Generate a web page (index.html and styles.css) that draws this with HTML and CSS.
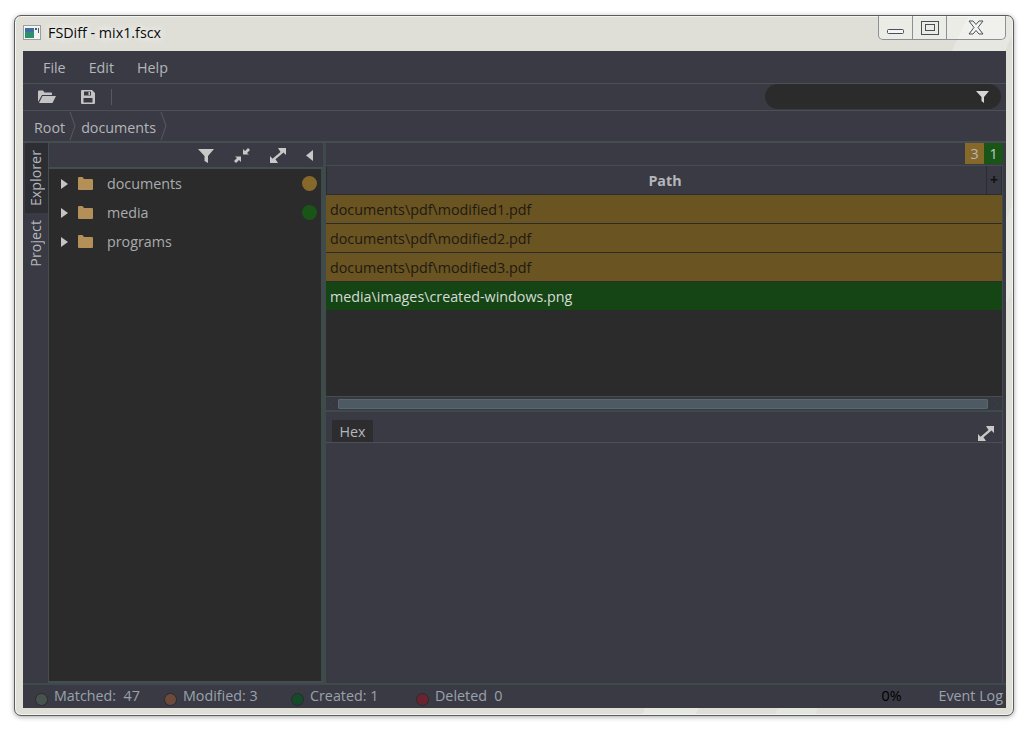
FILE: index.html
```html
<!DOCTYPE html>
<html lang="en">
<head>
<meta charset="utf-8">
<title>FSDiff - mix1.fscx</title>
<link rel="stylesheet" href="styles.css">
</head>
<body>
<div class="window">
  <header class="titlebar">
    <svg class="app-icon" width="18" height="15" viewBox="0 0 18 15">
      <rect x="0.5" y="0.5" width="17" height="14" fill="#f2f4f4" stroke="#9a9fa3"/>
      <rect x="2" y="3" width="9" height="10" fill="#2f8f6c"/>
      <rect x="2" y="3" width="9" height="4" fill="#3f6f9f"/>
      <rect x="12" y="3" width="2" height="2" fill="#4a5a60"/>
      <rect x="15" y="3" width="1" height="5" fill="#4a5a60"/>
    </svg>
    <span class="title-text">FSDiff - mix1.fscx</span>
    <div class="win-controls">
      <div class="win-btn win-min"><svg width="17" height="6" viewBox="0 0 17 6"><rect x="0.5" y="0.5" width="16" height="4" rx="1" fill="#f4f5f6" stroke="#4a4f55"/></svg></div>
      <div class="win-btn win-max"><svg width="18" height="14" viewBox="0 0 18 14"><rect x="0.5" y="0.5" width="17" height="13" fill="none" stroke="#4a4f55"/><rect x="4.500" y="3.500" width="9" height="6" fill="none" stroke="#4a4f55"/></svg></div>
      <div class="win-btn win-close"><svg width="16" height="15" viewBox="0 0 16 15"><path d="M1 1h4l3 3.500L11 1h4L10 7.500l5 6.500h-4L8 10.500 5 14H1l5-6.500z" fill="#f3f4f5" stroke="#4a4f55"/></svg></div>
    </div>
  </header>
  <div class="app">
    <nav class="menubar">
      <span class="menu-item">File</span>
      <span class="menu-item">Edit</span>
      <span class="menu-item">Help</span>
    </nav>
    <div class="toolbar">
      <button class="tool-btn"><svg width="18" height="13" viewBox="0 0 18 13"><path d="M0 12V1.500Q0 .5 1 .5h4l1.500 2H13q1 0 1 1V5H4z" fill="#c4c4c4"/><path d="M4.500 6H18l-3.500 7H1z" fill="#c4c4c4"/></svg></button>
      <button class="tool-btn"><svg width="14" height="14" viewBox="0 0 14 14"><path fill-rule="evenodd" d="M1 0h10l3 3v10q0 1-1 1H1q-1 0-1-1V1q0-1 1-1zM3 1.500V5.500h7V1.500zM2.500 8v4.500h9V8z" fill="#c4c4c4"/><rect x="7.500" y="2" width="1.500" height="3" fill="#c4c4c4"/></svg></button>
      <span class="tool-sep"></span>
      <div class="search">
        <svg width="13" height="13" viewBox="0 0 13 13"><path d="M0 1h13L8 7v6L5.500 11V7z" fill="#d6d6d6"/></svg>
      </div>
    </div>
    <div class="breadcrumb">
      <span class="crumb">Root</span>
      <svg class="crumb-sep" width="7" height="30" viewBox="0 0 7 30"><path d="M1 1l5 14-5 14" fill="none" stroke="#565a60"/></svg>
      <span class="crumb">documents</span>
      <svg class="crumb-sep" width="7" height="30" viewBox="0 0 7 30"><path d="M1 1l5 14-5 14" fill="none" stroke="#565a60"/></svg>
    </div>
    <main class="workspace">
      <aside class="side-tabs">
        <div class="side-tab side-tab-active"><span>Explorer</span></div>
        <div class="side-tab"><span>Project</span></div>
      </aside>
      <section class="explorer">
        <div class="explorer-tools">
          <svg width="16" height="15" viewBox="0 0 16 15"><path d="M0 1h16L10 8v7L6.500 13V8z" fill="#c8c8c8"/></svg>
          <svg width="16" height="15" viewBox="0 0 16 15"><path d="M9 6.500V1l2 2 3-3 2 2-3 3 2 1.500zM7 8.500V14l-2-2-3 3-2-2 3-3-2-1.500z" fill="#c8c8c8"/></svg>
          <svg width="16" height="15" viewBox="0 0 16 15"><path d="M16 0v7l-2.500-2.500-8 6.800L8 15H0V8l2.500 2.700 8-6.800L8 0z" fill="#c8c8c8"/></svg>
          <svg width="7" height="11" viewBox="0 0 7 11"><path d="M7 0v11L0 5.500z" fill="#c8c8c8"/></svg>
        </div>
        <ul class="tree">
          <li class="tree-row"><i class="caret"></i><svg class="folder" width="15" height="13" viewBox="0 0 15 13"><path d="M0 1q0-1 1-1h3.500l1.500 2h8q1 0 1 1v9q0 1-1 1H1q-1 0-1-1z" fill="#b48f58"/></svg><span class="tree-label">documents</span><i class="dot dot-amber"></i></li>
          <li class="tree-row"><i class="caret"></i><svg class="folder" width="15" height="13" viewBox="0 0 15 13"><path d="M0 1q0-1 1-1h3.500l1.500 2h8q1 0 1 1v9q0 1-1 1H1q-1 0-1-1z" fill="#b48f58"/></svg><span class="tree-label">media</span><i class="dot dot-green"></i></li>
          <li class="tree-row"><i class="caret"></i><svg class="folder" width="15" height="13" viewBox="0 0 15 13"><path d="M0 1q0-1 1-1h3.500l1.500 2h8q1 0 1 1v9q0 1-1 1H1q-1 0-1-1z" fill="#b48f58"/></svg><span class="tree-label">programs</span></li>
        </ul>
      </section>
      <section class="details">
        <div class="badges">
          <span class="badge badge-amber">3</span>
          <span class="badge badge-green">1</span>
        </div>
        <div class="table">
          <div class="table-head">
            <div class="th-path">Path</div>
            <div class="th-plus">+</div>
          </div>
          <div class="table-body">
            <div class="file-row file-mod">documents\pdf\modified1.pdf</div>
            <div class="file-row file-mod">documents\pdf\modified2.pdf</div>
            <div class="file-row file-mod">documents\pdf\modified3.pdf</div>
            <div class="file-row file-new">media\images\created-windows.png</div>
          </div>
          <div class="hscroll">
            <svg width="8" height="12" viewBox="0 0 8 12"><path d="M7 1L1 6l6 5" fill="none" stroke="#3a3f42"/></svg>
            <div class="hscroll-thumb"></div>
            <svg width="8" height="12" viewBox="0 0 8 12"><path d="M1 1l6 5-6 5" fill="none" stroke="#3a3f42"/></svg>
          </div>
        </div>
        <div class="hex-panel">
          <div class="hex-tabs">
            <span class="hex-tab">Hex</span>
            <svg width="16" height="15" viewBox="0 0 16 15"><path d="M16 0v7l-2.500-2.500-8 6.800L8 15H0V8l2.500 2.700 8-6.800L8 0z" fill="#c8c8c8"/></svg>
          </div>
        </div>
      </section>
    </main>
    <footer class="statusbar">
      <div class="stat stat-1"><i class="stat-dot sd-gray"></i><span>Matched:&nbsp; 47</span></div>
      <div class="stat stat-2"><i class="stat-dot sd-brown"></i><span>Modified: 3</span></div>
      <div class="stat stat-3"><i class="stat-dot sd-green"></i><span>Created: 1</span></div>
      <div class="stat stat-4"><i class="stat-dot sd-red"></i><span>Deleted&nbsp; 0</span></div>
      <span class="progress">0%</span>
      <span class="event-log">Event Log</span>
    </footer>
  </div>
</div>
</body>
</html>
```
FILE: styles.css
```css
* { box-sizing: border-box; }
html, body { margin: 0; padding: 0; height: 100%; background: #fff; overflow: hidden; }
body { padding: 15px 15px 15px 14px; font-family: "Open Sans", "Noto Sans", sans-serif; font-size: 14.3px; }

.window {
  width: 1000px;
  height: 701px;
  display: flex;
  flex-direction: column;
  padding: 0 7px 7px 8px;
  border: 1px solid #5a5d60;
  border-radius: 7px;
  box-shadow: 0 1px 5px rgba(0,0,0,.35), inset 0 0 0 1px #f4f4f0;
  background:
    linear-gradient(115deg, transparent 72%, rgba(255,255,255,.25) 72% 76%, transparent 76% 82%, rgba(255,255,255,.2) 82% 85%, transparent 85%),
    #dfdfd8;
}

.titlebar { height: 35px; flex: none; display: flex; align-items: flex-start; }
.app-icon { margin-top: 9px; flex: none; }
.title-text {
  margin: 7px 0 0 7px;
  line-height: 20px;
  color: #0a0a0a;
  text-shadow: 0 0 8px #fff, 0 0 8px #fff;
}
.win-controls {
  margin-left: auto;
  display: flex;
  height: 24px;
  border: 1px solid #8c9096;
  border-top: 0;
  border-radius: 0 0 5px 5px;
  background: rgba(255,255,255,.4);
}
.win-btn { display: flex; align-items: center; justify-content: center; border-right: 1px solid #8c9096; }
.win-btn:last-child { border-right: 0; }
.win-min { width: 34px; padding-top: 9px; }
.win-max { width: 34px; }
.win-close { width: 58px; }

.app {
  flex: 1;
  min-height: 0;
  display: flex;
  flex-direction: column;
  background: #393a44;
  color: #b4b6ba;
}

.menubar {
  height: 33px;
  flex: none;
  display: flex;
  align-items: center;
  gap: 23px;
  padding-left: 20px;
  border-bottom: 1px solid #4b5054;
}
.toolbar {
  height: 27px;
  flex: none;
  display: flex;
  align-items: center;
  padding: 0 0 1px 15px;
  border-bottom: 1px solid #4b5054;
}
.tool-btn { padding: 0; border: 0; background: none; display: flex; }
.tool-btn + .tool-btn { margin-left: 25px; }
.tool-sep { width: 1px; height: 16px; margin-left: 16px; background: #555a5e; }
.search {
  margin-left: auto;
  margin-right: 5px;
  width: 236px;
  height: 25px;
  border-radius: 13px;
  background: #2b2b2b;
  display: flex;
  align-items: center;
  justify-content: flex-end;
  padding-right: 12px;
}
.breadcrumb {
  height: 32px;
  flex: none;
  display: flex;
  align-items: center;
  padding: 2px 0 0 11px;
  border-bottom: 2px solid #464d50;
}
.crumb-sep { flex: none; margin: -2px 5px 0 4px; }

.workspace { flex: 1; min-height: 0; display: flex; }
.side-tabs { width: 26px; flex: none; padding-left: 2px; display: flex; flex-direction: column; border-right: 1px solid #464d50; }
.side-tab { height: 60px; padding-right: 2px; display: flex; justify-content: center; align-items: center; }
.side-tab span { writing-mode: vertical-rl; transform: rotate(180deg); color: #b4b6ba; }
.side-tab-active { height: 70px; background: #2d2e33; }

.explorer { width: 274px; flex: none; display: flex; flex-direction: column; }
.explorer-tools {
  height: 26px;
  flex: none;
  display: flex;
  align-items: center;
  justify-content: flex-end;
  gap: 20px;
  padding: 0 10px 0 0;
  border-bottom: 2px solid #464d50;
}
.tree {
  flex: 1;
  margin: 0;
  padding: 0;
  list-style: none;
  background: #2b2b2b;
  border-right: 2px solid #3f4a4a;
  border-bottom: 2px solid #464d50;
  color: #a9abae;
}
.tree-row { height: 29px; display: flex; align-items: center; padding: 0 4px 0 12px; }
.caret {
  width: 0; height: 0; flex: none;
  border-left: 7px solid #c4c4c4;
  border-top: 5px solid transparent;
  border-bottom: 5px solid transparent;
}
.folder { flex: none; margin: 0 14px 0 10px; }
.tree-label { flex: 1; }
.dot { width: 15px; height: 15px; border-radius: 50%; }
.dot-amber { background: #86692a; }
.dot-green { background: #1a5518; }

.details { flex: 1; min-width: 0; display: flex; flex-direction: column; padding: 0 3px 0 0; border-left: 3px solid #3f4a4a; }
.badges { height: 22px; flex: none; display: flex; justify-content: flex-end; }
.badge { width: 19px; height: 21px; text-align: center; line-height: 21px; }
.badge-amber { background: #86692a; color: #b4b6ba; }
.badge-green { background: #1a5518; color: #b4d0c8; }

.table { height: 247px; flex: none; display: flex; flex-direction: column; background: #2b2b2b; border-top: 1px solid #464d50; border-right: 1px solid #3f4a4a; }
.table-head { height: 29px; flex: none; display: flex; background: #393a44; }
.th-path { flex: 1; padding-left: 17px; text-align: center; font-weight: 700; line-height: 29px; color: #b4b6ba; border: 1px solid #2b2c30; border-top: 0; }
.th-plus { width: 15px; text-align: center; line-height: 27px; font-weight: 700; color: #111; border: 1px solid #2b2c30; border-left: 0; border-top: 0; }
.table-body { flex: 1; min-height: 0; }
.file-row { height: 29px; line-height: 30px; padding-left: 4px; }
.file-mod { background: #6a5422; color: #1e1a10; border-bottom: 1px solid #2b2b2b; }
.file-new { background: #154515; color: #d6dcd6; border-bottom: 1px solid #2b2b2b; }
.hscroll {
  height: 16px;
  flex: none;
  display: flex;
  align-items: center;
  gap: 2px;
  padding: 0 2px;
  background: #363a40;
  border-top: 1px solid #464d50;
  border-bottom: 2px solid #3f4a4a;
}
.hscroll-thumb { flex: 1; height: 10px; margin-right: 2px; border-radius: 2px; background: #4e5a63; box-shadow: inset 0 0 0 1px #5b666e; }

.hex-panel { flex: 1; min-height: 0; border-right: 1px solid #464d50; }
.hex-tabs { height: 31px; display: flex; align-items: flex-end; justify-content: space-between; padding: 0 8px 0 6px; border-bottom: 1px solid #4b5054; }
.hex-tabs svg { margin-bottom: 1px; }
.hex-tab { width: 41px; height: 22px; background: #2d2d2f; text-align: center; line-height: 23px; color: #b4b6ba; }

.statusbar {
  height: 25px;
  flex: none;
  display: flex;
  align-items: flex-start;
  padding-left: 12px;
  line-height: 21px;
  color: #9aa2ac;
  border-top: 2px solid #3f4a4a;
}
.stat { display: flex; flex: none; }
.stat-1 { width: 129px; }
.stat-2 { width: 127px; }
.stat-3 { width: 125px; }
.stat-dot { width: 13px; height: 13px; flex: none; border-radius: 50%; margin: 8px 6px 0 0; border: 1px solid #2b2b2b; }
.sd-gray { background: #47534f; }
.sd-brown { background: #6d4a3c; }
.sd-green { background: #154a2a; }
.sd-red { background: #6a2430; }
.progress { margin-left: auto; color: #000; }
.event-log { margin: 0 3px 0 37px; }
.menu-item { color: #b4b6ba; }
```
